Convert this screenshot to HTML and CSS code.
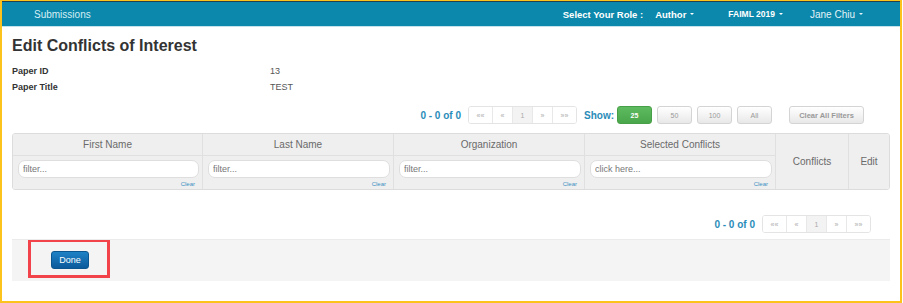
FILE: index.html
```html
<!DOCTYPE html>
<html lang="en">
<head>
    <meta charset="UTF-8">
    <title>Edit Conflicts of Interest</title>
    <link rel="stylesheet" href="styles.css">
</head>
<body>
    <div class="frame">
        <div class="navbar">
            <a class="nav-link">Submissions</a>
            <div class="nav-right">
                <span class="role-label">Select Your Role :</span>
                <span class="nav-drop role">Author <i class="caret"></i></span>
                <span class="nav-drop conf">FAIML 2019 <i class="caret"></i></span>
                <span class="nav-drop user">Jane Chiu <i class="caret"></i></span>
            </div>
        </div>

        <div class="content">
            <h1>Edit Conflicts of Interest</h1>
            <div class="info-row"><span class="info-label">Paper ID</span><span>13</span></div>
            <div class="info-row"><span class="info-label">Paper Title</span><span>TEST</span></div>

            <div class="toolbar">
                <span class="count">0 - 0 of 0</span>
                <div class="pager">
                    <span>&laquo;&laquo;</span><span>&laquo;</span><span class="active">1</span><span>&raquo;</span><span>&raquo;&raquo;</span>
                </div>
                <span class="show">Show:</span>
                <button class="btn btn-green">25</button>
                <button class="btn">50</button>
                <button class="btn">100</button>
                <button class="btn">All</button>
                <button class="btn btn-clear">Clear All Filters</button>
            </div>

            <div class="grid-wrap">
                <table class="grid">
                    <tr class="head">
                        <th class="c1">First Name</th>
                        <th class="c2">Last Name</th>
                        <th class="c3">Organization</th>
                        <th class="c4">Selected Conflicts</th>
                        <th class="c5" rowspan="2">Conflicts</th>
                        <th class="c6" rowspan="2">Edit</th>
                    </tr>
                    <tr class="filters">
                        <td><input placeholder="filter..."><div class="clear">Clear</div></td>
                        <td><input placeholder="filter..."><div class="clear">Clear</div></td>
                        <td><input placeholder="filter..."><div class="clear">Clear</div></td>
                        <td><input placeholder="click here..."><div class="clear">Clear</div></td>
                    </tr>
                </table>
            </div>

            <div class="toolbar bottom">
                <span class="count">0 - 0 of 0</span>
                <div class="pager">
                    <span>&laquo;&laquo;</span><span>&laquo;</span><span class="active">1</span><span>&raquo;</span><span>&raquo;&raquo;</span>
                </div>
            </div>

            <div class="footer">
                <div class="highlight">
                    <button class="btn-done">Done</button>
                </div>
            </div>
        </div>
    </div>
</body>
</html>
```

FILE: styles.css
```css
body {
    margin: 0;
    background: #fff;
    font-family: "Liberation Sans", Arial, sans-serif;
    color: #333;
}
.frame {
    box-sizing: border-box;
    width: 902px;
    height: 303px;
    border: 2px solid #fbc31c;
    border-top-width: 1px;
    overflow: hidden;
}
.navbar {
    display: flex;
    align-items: center;
    height: 24px;
    background: #0b88ab;
    border-top: 1px solid #24414c;
    border-bottom: 1px solid #c4e2ea;
    font-size: 10px;
}
.nav-link {
    margin-left: 32px;
    color: #d6eef5;
}
.nav-right {
    display: flex;
    align-items: center;
    margin-left: auto;
    margin-right: 37px;
    color: #fff;
}
.role-label {
    font-weight: bold;
    font-size: 9.5px;
}
.nav-drop {
    display: flex;
    align-items: center;
}
.role {
    margin-left: 12px;
    font-weight: bold;
    font-size: 9.5px;
}
.conf {
    margin-left: 34px;
    font-weight: bold;
    font-size: 8.5px;
}
.user {
    margin-left: 27px;
    color: #e4f3f8;
}
.caret {
    display: inline-block;
    margin-left: 4px;
    border-left: 2px solid transparent;
    border-right: 2px solid transparent;
    border-top: 2px solid currentColor;
}
.content {
    padding: 0 10px;
}
h1 {
    margin: 9px 0 8px;
    font-size: 16px;
    line-height: 20px;
    color: #333;
}
.info-row {
    display: flex;
    font-size: 9px;
    line-height: 15.5px;
    color: #555;
}
.info-label {
    width: 258px;
    font-weight: bold;
    color: #333;
}
.toolbar {
    display: flex;
    align-items: center;
    justify-content: flex-end;
    height: 18px;
    margin: 11px 26px 9px 0;
}
.toolbar.bottom {
    margin: 25px 19px 6px 0;
}
.count {
    font-size: 10px;
    font-weight: bold;
    color: #2a8cb8;
    margin-right: 7px;
}
.pager {
    display: flex;
    height: 18px;
    border: 1px solid #e4e4e4;
    border-radius: 3px;
    box-sizing: border-box;
    overflow: hidden;
}
.pager span {
    display: flex;
    align-items: center;
    justify-content: center;
    width: 19px;
    font-size: 7px;
    color: #aaa;
    background: #fff;
    border-left: 1px solid #e8e8e8;
}
.pager span:first-child {
    width: 23px;
    border-left: none;
}
.pager span:last-child {
    width: 23px;
}
.pager .active {
    background: #f3f3f3;
}
.show {
    margin-left: 7px;
    font-size: 10px;
    font-weight: bold;
    color: #2a8cb8;
}
.btn {
    box-sizing: border-box;
    width: 35px;
    height: 18px;
    margin-left: 5px;
    padding: 0;
    font-family: inherit;
    font-size: 7px;
    color: #999;
    background: linear-gradient(#fff, #e8e8e8);
    border: 1px solid #d4d4d4;
    border-radius: 3px;
}
.btn-green {
    margin-left: 3px;
    color: #fff;
    font-weight: bold;
    background: linear-gradient(#5fbb5f, #4aa64a);
    border-color: #47a047;
}
.btn-clear {
    width: 75px;
    margin-left: 17px;
    font-size: 7.5px;
    font-weight: bold;
}
.grid-wrap {
    border: 1px solid #dcdcdc;
    border-radius: 3px;
    overflow: hidden;
}
.grid {
    width: 100%;
    border-collapse: collapse;
    background: #efefef;
    table-layout: fixed;
}
.grid th {
    height: 21px;
    padding: 0;
    font-size: 10px;
    font-weight: normal;
    color: #6a6a6a;
    border-left: 1px solid #e0e0e0;
    border-bottom: 1px solid #e0e0e0;
}
.grid th:first-child {
    border-left: none;
}
.grid th.c5, .grid th.c6 {
    border-bottom: none;
}
.c1 { width: 189px; }
.c2 { width: 190px; }
.c3 { width: 190px; }
.c4 { width: 190px; }
.c5 { width: 72px; }
.grid td {
    padding: 4px 3px 1px 5px;
    border-left: 1px solid #e0e0e0;
    vertical-align: top;
}
.grid td:first-child {
    border-left: none;
}
.grid input {
    display: block;
    box-sizing: border-box;
    width: 100%;
    height: 18px;
    padding: 0 4px;
    font-family: inherit;
    font-size: 9px;
    color: #555;
    background: #fff;
    border: 1px solid #dedede;
    border-radius: 7px;
    outline: none;
}
.grid input::placeholder {
    color: #777;
}
.clear {
    margin: 2px 4px 0 0;
    text-align: right;
    font-size: 6px;
    line-height: 8px;
    color: #3b8fc2;
}
.footer {
    height: 42px;
    box-sizing: border-box;
    padding-left: 16px;
    background: #f4f4f4;
    border-top: 1px solid #ebebeb;
}
.highlight {
    display: inline-block;
    padding: 9px 18px 6px 20px;
    border: 3px solid #f2434b;
    border-top-width: 2px;
}
.btn-done {
    display: block;
    box-sizing: border-box;
    width: 38px;
    height: 18px;
    padding: 0;
    font-family: inherit;
    font-size: 9px;
    color: #fff;
    background: linear-gradient(#1f82c6, #0b5a9b);
    border: 1px solid #0b5690;
    border-radius: 3px;
}
```
